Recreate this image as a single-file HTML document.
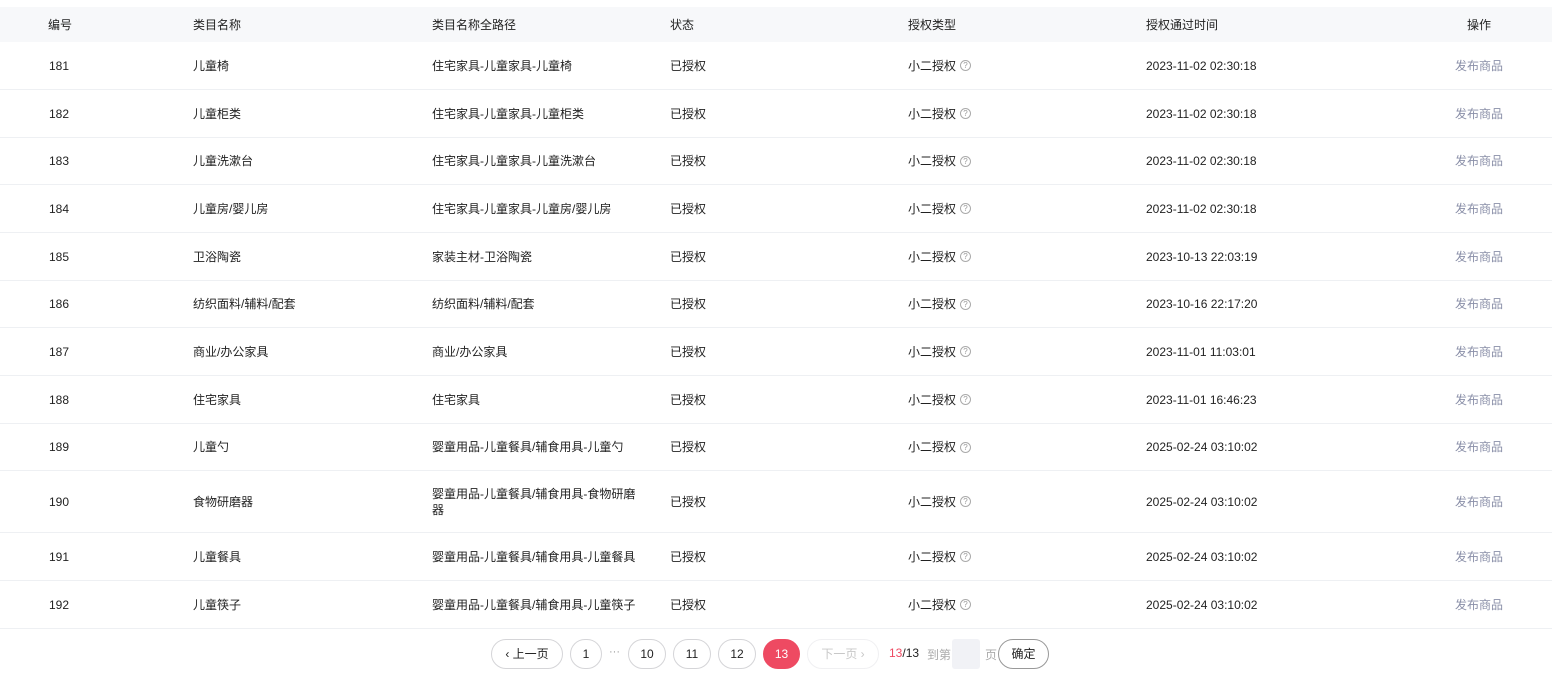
<!DOCTYPE html>
<html><head><meta charset="utf-8"><style>
*{margin:0;padding:0;box-sizing:border-box}
body{width:1552px;height:692px;background:#fff;font-family:"Liberation Sans","Noto Sans CJK SC",sans-serif;font-size:12px;color:#222;position:relative;overflow:hidden}
.hd{position:absolute;left:0;top:7px;width:1552px;height:35px;background:#f7f8fa}
.row{position:absolute;left:0;width:1552px;border-bottom:1px solid #eef0f3}
.c{position:absolute;top:50%;transform:translateY(-50%);line-height:16px}
.c1{left:49px}.c2{left:193px}.c3{left:432px;width:215px}.c4{left:670px}.c5{left:908px;display:flex;align-items:center}.c6{left:1146px}.c7{left:1455px;color:#8a8fa8}
.hd .c1{left:48px}.hd .c7{left:1467px;color:#222}
.q{display:inline-block;width:11px;height:11px;border:1px solid #aaa;border-radius:50%;font-size:8px;line-height:9px;text-align:center;color:#999;margin-left:4px;font-style:normal}
.b{position:absolute;top:639px;height:30px;border:1px solid #d5d5d8;border-radius:15px;text-align:center;line-height:28px;font-size:12px;color:#222}
</style></head><body>
<div class="hd"><span class="c c1">编号</span><span class="c c2">类目名称</span><span class="c c3">类目名称全路径</span><span class="c c4">状态</span><span class="c c5">授权类型</span><span class="c c6">授权通过时间</span><span class="c c7">操作</span></div>

<div class="row" style="top:42px;height:48px"><span class="c c1">181</span><span class="c c2">儿童椅</span><span class="c c3">住宅家具-儿童家具-儿童椅</span><span class="c c4">已授权</span><span class="c c5">小二授权<i class="q">?</i></span><span class="c c6">2023-11-02 02:30:18</span><span class="c c7">发布商品</span></div>
<div class="row" style="top:90px;height:48px"><span class="c c1">182</span><span class="c c2">儿童柜类</span><span class="c c3">住宅家具-儿童家具-儿童柜类</span><span class="c c4">已授权</span><span class="c c5">小二授权<i class="q">?</i></span><span class="c c6">2023-11-02 02:30:18</span><span class="c c7">发布商品</span></div>
<div class="row" style="top:138px;height:47px"><span class="c c1">183</span><span class="c c2">儿童洗漱台</span><span class="c c3">住宅家具-儿童家具-儿童洗漱台</span><span class="c c4">已授权</span><span class="c c5">小二授权<i class="q">?</i></span><span class="c c6">2023-11-02 02:30:18</span><span class="c c7">发布商品</span></div>
<div class="row" style="top:185px;height:48px"><span class="c c1">184</span><span class="c c2">儿童房/婴儿房</span><span class="c c3">住宅家具-儿童家具-儿童房/婴儿房</span><span class="c c4">已授权</span><span class="c c5">小二授权<i class="q">?</i></span><span class="c c6">2023-11-02 02:30:18</span><span class="c c7">发布商品</span></div>
<div class="row" style="top:233px;height:48px"><span class="c c1">185</span><span class="c c2">卫浴陶瓷</span><span class="c c3">家装主材-卫浴陶瓷</span><span class="c c4">已授权</span><span class="c c5">小二授权<i class="q">?</i></span><span class="c c6">2023-10-13 22:03:19</span><span class="c c7">发布商品</span></div>
<div class="row" style="top:281px;height:47px"><span class="c c1">186</span><span class="c c2">纺织面料/辅料/配套</span><span class="c c3">纺织面料/辅料/配套</span><span class="c c4">已授权</span><span class="c c5">小二授权<i class="q">?</i></span><span class="c c6">2023-10-16 22:17:20</span><span class="c c7">发布商品</span></div>
<div class="row" style="top:328px;height:48px"><span class="c c1">187</span><span class="c c2">商业/办公家具</span><span class="c c3">商业/办公家具</span><span class="c c4">已授权</span><span class="c c5">小二授权<i class="q">?</i></span><span class="c c6">2023-11-01 11:03:01</span><span class="c c7">发布商品</span></div>
<div class="row" style="top:376px;height:48px"><span class="c c1">188</span><span class="c c2">住宅家具</span><span class="c c3">住宅家具</span><span class="c c4">已授权</span><span class="c c5">小二授权<i class="q">?</i></span><span class="c c6">2023-11-01 16:46:23</span><span class="c c7">发布商品</span></div>
<div class="row" style="top:424px;height:47px"><span class="c c1">189</span><span class="c c2">儿童勺</span><span class="c c3">婴童用品-儿童餐具/辅食用具-儿童勺</span><span class="c c4">已授权</span><span class="c c5">小二授权<i class="q">?</i></span><span class="c c6">2025-02-24 03:10:02</span><span class="c c7">发布商品</span></div>
<div class="row" style="top:471px;height:62px"><span class="c c1">190</span><span class="c c2">食物研磨器</span><span class="c c3">婴童用品-儿童餐具/辅食用具-食物研磨器</span><span class="c c4">已授权</span><span class="c c5">小二授权<i class="q">?</i></span><span class="c c6">2025-02-24 03:10:02</span><span class="c c7">发布商品</span></div>
<div class="row" style="top:533px;height:48px"><span class="c c1">191</span><span class="c c2">儿童餐具</span><span class="c c3">婴童用品-儿童餐具/辅食用具-儿童餐具</span><span class="c c4">已授权</span><span class="c c5">小二授权<i class="q">?</i></span><span class="c c6">2025-02-24 03:10:02</span><span class="c c7">发布商品</span></div>
<div class="row" style="top:581px;height:48px"><span class="c c1">192</span><span class="c c2">儿童筷子</span><span class="c c3">婴童用品-儿童餐具/辅食用具-儿童筷子</span><span class="c c4">已授权</span><span class="c c5">小二授权<i class="q">?</i></span><span class="c c6">2025-02-24 03:10:02</span><span class="c c7">发布商品</span></div>

<div class="b" style="left:491px;width:72px">‹&nbsp;上一页</div>
<div class="b" style="left:570px;width:32px">1</div>
<div style="position:absolute;left:609px;top:646px;color:#999;font-size:11px">···</div>
<div class="b" style="left:628px;width:38px">10</div>
<div class="b" style="left:673px;width:38px">11</div>
<div class="b" style="left:718px;width:38px">12</div>
<div class="b" style="left:763px;width:37px;background:#ee4a62;border-color:#ee4a62;color:#fff">13</div>
<div class="b" style="left:807px;width:72px;color:#c8c8c8;border-color:#f0f0f2">下一页&nbsp;›</div>
<div style="position:absolute;left:889px;top:646px;font-size:12px"><span style="color:#ee4a62">13</span>/13</div>
<div style="position:absolute;left:927px;top:646px;color:#aaa">到第</div>
<div style="position:absolute;left:952px;top:639px;width:28px;height:30px;background:#f1f2f6;border-radius:3px"></div>
<div style="position:absolute;left:985px;top:646px;color:#aaa">页</div>
<div class="b" style="left:998px;width:51px;border-color:#999">确定</div>
</body></html>
